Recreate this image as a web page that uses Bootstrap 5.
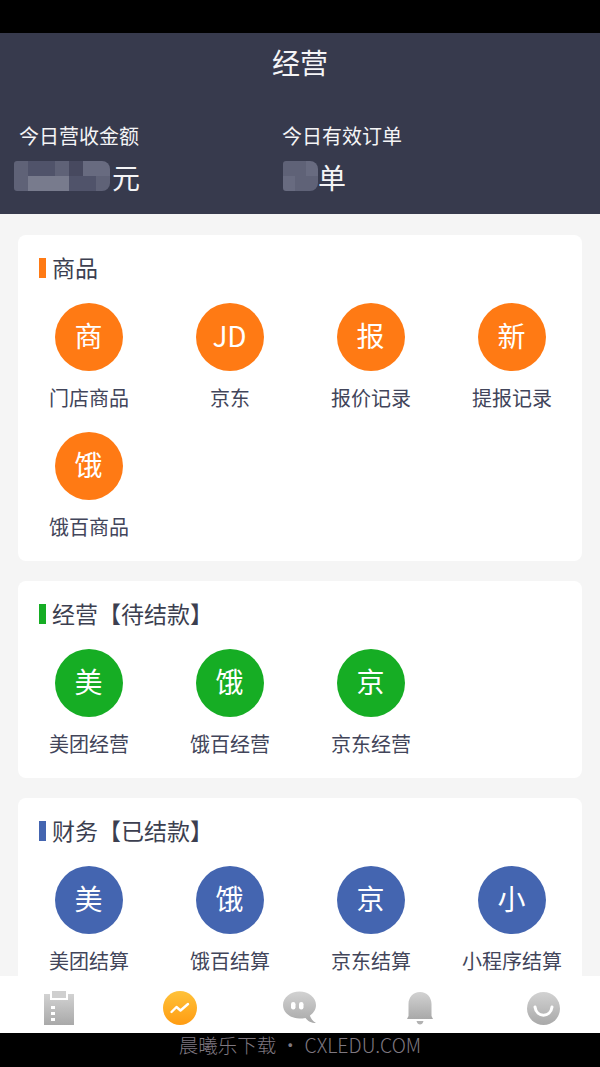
<!DOCTYPE html>
<html lang="zh">
<head>
  <meta charset="UTF-8">
  <title>经营</title>
  <link rel="stylesheet" href="https://cdn.jsdelivr.net/npm/bootstrap@5.3.0/dist/css/bootstrap.min.css">
  <style>
    html, body { height: 1067px; overflow: hidden; }
    body { background: #000; font-family: "Noto Sans CJK SC", "Liberation Sans", sans-serif; }
    .phone-top { height: 33px; background: #000; }
    .screen { height: 1000px; background: #f5f5f5; }
    .head-bar { height: 181px; background: #373a4d; color: #f4f4f6; flex: none; }
    .head-title { font-size: 28px; line-height: 40px; padding-top: 9px; }
    .stat-row { padding-top: 39px; }
    .stat-one { width: 263px; padding-left: 19px; }
    .stat-label { font-size: 20px; line-height: 30px; }
    .stat-value { font-size: 28px; line-height: 36px; margin-top: 8px; margin-left: -5px; }
    .mosaic { display: grid; grid-auto-rows: 15px; border-radius: 3px 8px 8px 3px; overflow: hidden; margin-top: -3px; }
    .mosaic-a { grid-template-columns: repeat(7, 1fr); width: 96px; margin-right: 2px; }
    .mosaic-b { grid-template-columns: repeat(3, 1fr); width: 35px; margin-left: 6px; }
    .m1 { background: #50536a; }
    .m2 { background: #5f6277; }
    .m3 { background: #787b8d; }
    .m4 { background: #686b80; }
    .m5 { background: #47495f; }
    .scroll-area { overflow: hidden; padding: 21px 18px 0; min-height: 0; }
    .panel { background: #fff; border-radius: 8px; margin-bottom: 20px; padding-bottom: 21px; flex: none; }
    .panel-title { font-size: 23px; line-height: 30px; color: #3c3f50; padding: 17px 0 0 21px; }
    .title-mark { width: 7px; height: 20px; margin-right: 6px; margin-top: 2px; }
    .item-grid { display: grid; grid-template-columns: repeat(4, 141px); }
    .item-cell { height: 129px; padding-top: 21px; }
    .item-circle { width: 68px; height: 68px; border-radius: 50%; color: #fff; font-size: 28px; margin: 0 auto; padding-bottom: 4px; }
    .item-label { font-size: 20px; line-height: 30px; color: #42455a; margin-top: 12px; padding-left: 1px; }
    .tone-orange { background: #ff7a14; }
    .tone-green { background: #16ad24; }
    .tone-blue { background: #4465b0; }
    .tab-bar { height: 57px; background: #fff; flex: none; }
    .tab-cell { width: 120px; padding-top: 7px; }
    .nudge-left { margin-left: -2px; }
    .nudge-right { margin-left: 6px; }
    .foot-mark { height: 34px; background: #000; color: #7f7880; font-size: 19.5px; line-height: 24px; font-weight: 300; }
  </style>
</head>
<body>
  <div class="phone-top"></div>
  <div class="screen d-flex flex-column">
    <div class="head-bar">
      <div class="head-title text-center">经营</div>
      <div class="stat-row d-flex">
        <div class="stat-one">
          <div class="stat-label">今日营收金额</div>
          <div class="stat-value d-flex align-items-center">
            <div class="mosaic mosaic-a">
              <i class="m2"></i><i class="m1"></i><i class="m1"></i><i class="m2"></i><i class="m5"></i><i class="m4"></i><i class="m4"></i>
              <i class="m2"></i><i class="m3"></i><i class="m3"></i><i class="m3"></i><i class="m1"></i><i class="m1"></i><i class="m2"></i>
            </div>
            <span>元</span>
          </div>
        </div>
        <div class="stat-one">
          <div class="stat-label">今日有效订单</div>
          <div class="stat-value d-flex align-items-center">
            <div class="mosaic mosaic-b">
              <i class="m2"></i><i class="m2"></i><i class="m4"></i>
              <i class="m4"></i><i class="m2"></i><i class="m2"></i>
            </div>
            <span>单</span>
          </div>
        </div>
      </div>
    </div>

    <div class="scroll-area flex-grow-1 d-flex flex-column">
      <section class="panel">
        <div class="panel-title d-flex align-items-center"><span class="title-mark tone-orange"></span>商品</div>
        <div class="item-grid text-center">
          <div class="item-cell"><div class="item-circle tone-orange d-flex align-items-center justify-content-center">商</div><div class="item-label">门店商品</div></div>
          <div class="item-cell"><div class="item-circle tone-orange d-flex align-items-center justify-content-center">JD</div><div class="item-label">京东</div></div>
          <div class="item-cell"><div class="item-circle tone-orange d-flex align-items-center justify-content-center">报</div><div class="item-label">报价记录</div></div>
          <div class="item-cell"><div class="item-circle tone-orange d-flex align-items-center justify-content-center">新</div><div class="item-label">提报记录</div></div>
          <div class="item-cell"><div class="item-circle tone-orange d-flex align-items-center justify-content-center">饿</div><div class="item-label">饿百商品</div></div>
        </div>
      </section>

      <section class="panel">
        <div class="panel-title d-flex align-items-center"><span class="title-mark tone-green"></span>经营【待结款】</div>
        <div class="item-grid text-center">
          <div class="item-cell"><div class="item-circle tone-green d-flex align-items-center justify-content-center">美</div><div class="item-label">美团经营</div></div>
          <div class="item-cell"><div class="item-circle tone-green d-flex align-items-center justify-content-center">饿</div><div class="item-label">饿百经营</div></div>
          <div class="item-cell"><div class="item-circle tone-green d-flex align-items-center justify-content-center">京</div><div class="item-label">京东经营</div></div>
        </div>
      </section>

      <section class="panel">
        <div class="panel-title d-flex align-items-center"><span class="title-mark tone-blue"></span>财务【已结款】</div>
        <div class="item-grid text-center">
          <div class="item-cell"><div class="item-circle tone-blue d-flex align-items-center justify-content-center">美</div><div class="item-label">美团结算</div></div>
          <div class="item-cell"><div class="item-circle tone-blue d-flex align-items-center justify-content-center">饿</div><div class="item-label">饿百结算</div></div>
          <div class="item-cell"><div class="item-circle tone-blue d-flex align-items-center justify-content-center">京</div><div class="item-label">京东结算</div></div>
          <div class="item-cell"><div class="item-circle tone-blue d-flex align-items-center justify-content-center">小</div><div class="item-label">小程序结算</div></div>
        </div>
      </section>
    </div>

    <nav class="tab-bar d-flex">
      <svg width="0" height="0" class="position-absolute">
        <defs>
          <linearGradient id="greyFill" x1="0" y1="0" x2="0" y2="1"><stop offset="0" stop-color="#d2d2d2"/><stop offset="1" stop-color="#a9a9a9"/></linearGradient>
          <linearGradient id="amberFill" x1="0" y1="0" x2="0" y2="1"><stop offset="0" stop-color="#ffc23a"/><stop offset="1" stop-color="#ff9c12"/></linearGradient>
        </defs>
      </svg>
      <div class="tab-cell d-flex justify-content-center align-items-center">
        <svg class="nudge-left" width="32" height="34" viewBox="0 0 32 34">
          <path d="M1 3 H7 V9 H25 V3 H31 V34 H1 Z" fill="url(#greyFill)"/>
          <rect x="9" y="0" width="14" height="7" fill="#cfcfcf"/>
          <rect x="8" y="15" width="4" height="3" fill="#fff"/><rect x="8" y="21" width="4" height="3" fill="#fff"/><rect x="8" y="27" width="4" height="3" fill="#fff"/>
        </svg>
      </div>
      <div class="tab-cell d-flex justify-content-center align-items-center">
        <svg width="34" height="34" viewBox="0 0 34 34">
          <circle cx="17" cy="17" r="17" fill="url(#amberFill)"/>
          <path d="M8.5 21 L13.5 16 L17.5 19.5 L25 13" fill="none" stroke="#fff" stroke-width="2.4" stroke-linecap="round" stroke-linejoin="round"/>
        </svg>
      </div>
      <div class="tab-cell d-flex justify-content-center align-items-center">
        <svg width="34" height="34" viewBox="0 0 34 34">
          <path d="M16.5 0.5 C25.6 0.5 33 6.5 33 14 C33 18.5 30.5 22 27 24.5 C27.5 27 29.5 30 33 32 C28.5 32 24.5 30 22.5 27 C20.5 27.4 18.5 27.5 16.5 27.5 C7.4 27.5 0 21.5 0 14 C0 6.5 7.4 0.5 16.5 0.5 Z" fill="url(#greyFill)"/>
          <rect x="8" y="11" width="4.5" height="7.5" rx="2.2" fill="#fff"/><rect x="16" y="11" width="4.5" height="7.5" rx="2.2" fill="#fff"/>
        </svg>
      </div>
      <div class="tab-cell d-flex justify-content-center align-items-center">
        <svg width="26" height="34" viewBox="0 0 26 34">
          <path d="M13 1 C20 1 24.5 6.5 24.5 13 L24.5 25 L26 28 L0 28 L1.5 25 L1.5 13 C1.5 6.5 6 1 13 1 Z" fill="url(#greyFill)"/>
          <path d="M9.5 30 H16.5 C16 32.5 14.5 33.5 13 33.5 C11.5 33.5 10 32.5 9.5 30 Z" fill="#b2b2b2"/>
        </svg>
      </div>
      <div class="tab-cell d-flex justify-content-center align-items-center">
        <svg class="nudge-right" width="33" height="33" viewBox="0 0 33 33">
          <circle cx="16.5" cy="16.5" r="16.5" fill="url(#greyFill)"/>
          <path d="M8 15 C9.5 26 23.5 26 25 15" fill="none" stroke="#fff" stroke-width="3" stroke-linecap="round"/>
        </svg>
      </div>
    </nav>
  </div>
  <div class="foot-mark text-center">晨曦乐下载 • CXLEDU.COM</div>
  <script src="https://cdn.jsdelivr.net/npm/bootstrap@5.3.0/dist/js/bootstrap.bundle.min.js"></script>
</body>
</html>
